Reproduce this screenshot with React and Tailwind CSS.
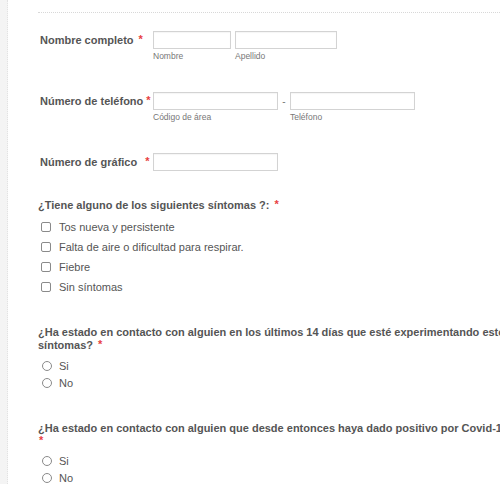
import React from "react";

const Req = ({ className = "" }) => (
  <span className={`text-[#e8403f] text-[11px] relative -top-[1px] ${className}`}>*</span>
);

const Field = ({ className = "" }) => (
  <div
    className={`h-[18px] bg-white border border-[#d3d3d3] shadow-[inset_0_1px_1px_rgba(0,0,0,0.04)] ${className}`}
  />
);

const Sub = ({ children }) => (
  <div className="mt-[2px] text-[8.5px] leading-[10px] text-[#777]">{children}</div>
);

const Check = ({ label }) => (
  <div className="h-[20px] flex items-center">
    <span className="ml-[3px] w-[10px] h-[10px] rounded-[2px] border border-[#8a8a8a] bg-white" />
    <span className="ml-[8px] text-[11px] text-[#555]">{label}</span>
  </div>
);

const Radio = ({ label }) => (
  <div className="h-[17.5px] flex items-center">
    <span className="ml-[4px] w-[10px] h-[10px] rounded-full border border-[#8a8a8a] bg-white" />
    <span className="ml-[7px] text-[11px] text-[#555]">{label}</span>
  </div>
);

export default function App() {
  return (
    <div
      className="w-[500px] h-[484px] overflow-hidden bg-white flex"
      style={{ fontFamily: '"Liberation Sans", Arial, sans-serif' }}
    >
      {/* left gutter */}
      <div className="w-[8px] shrink-0 bg-[#f4f4f4] border-r border-dotted border-[#e2e2e2]" />

      <div className="flex-1 min-w-0 pl-[30px] text-[#555]">
        <div className="mt-[12px] border-t border-dotted border-[#d8d8d8]" />

        {/* Nombre completo */}
        <div className="mt-[18px] flex items-start pl-[2px]">
          <div className="w-[113px] h-[18px] flex items-center font-bold text-[11px]">
            Nombre completo <Req className="ml-[5px]" />
          </div>
          <div className="w-[78px]">
            <Field />
            <Sub>Nombre</Sub>
          </div>
          <div className="w-[102px] ml-[4px]">
            <Field />
            <Sub>Apellido</Sub>
          </div>
        </div>

        {/* Número de teléfono */}
        <div className="mt-[31px] flex items-start pl-[2px]">
          <div className="w-[113px] h-[18px] flex items-center font-bold text-[11px]">
            Número de teléfono <Req className="ml-[3px]" />
          </div>
          <div className="w-[125px]">
            <Field />
            <Sub>Código de área</Sub>
          </div>
          <div className="w-[12px] h-[18px] flex items-center justify-center text-[10px] text-[#777]">-</div>
          <div className="w-[125px]">
            <Field />
            <Sub>Teléfono</Sub>
          </div>
        </div>

        {/* Número de gráfico */}
        <div className="mt-[31px] flex items-start pl-[2px]">
          <div className="w-[113px] h-[18px] flex items-center font-bold text-[11px]">
            Número de gráfico <Req className="ml-[8px]" />
          </div>
          <Field className="w-[125px]" />
        </div>

        {/* Síntomas */}
        <div className="mt-[28px] font-bold text-[11px] leading-[13px] whitespace-nowrap">
          ¿Tiene alguno de los siguientes síntomas ?: <Req className="ml-[2px]" />
        </div>
        <div className="mt-[5px]">
          <Check label="Tos nueva y persistente" />
          <Check label="Falta de aire o dificultad para respirar." />
          <Check label="Fiebre" />
          <Check label="Sin síntomas" />
        </div>

        {/* Contacto con síntomas */}
        <div className="mt-[29px] font-bold text-[11px] leading-[13px] whitespace-nowrap overflow-hidden">
          ¿Ha estado en contacto con alguien en los últimos 14 días que esté experimentando estos
          <br />
          síntomas? <Req className="ml-[2px]" />
        </div>
        <div className="mt-[5px]">
          <Radio label="Si" />
          <Radio label="No" />
        </div>

        {/* Contacto con positivo */}
        <div className="mt-[30px] font-bold text-[11px] leading-[13px] whitespace-nowrap overflow-hidden">
          ¿Ha estado en contacto con alguien que desde entonces haya dado positivo por Covid-19
          <br />
          <Req className="ml-[1px]" />
        </div>
        <div className="mt-[4px]">
          <Radio label="Si" />
          <Radio label="No" />
        </div>
      </div>
    </div>
  );
}
